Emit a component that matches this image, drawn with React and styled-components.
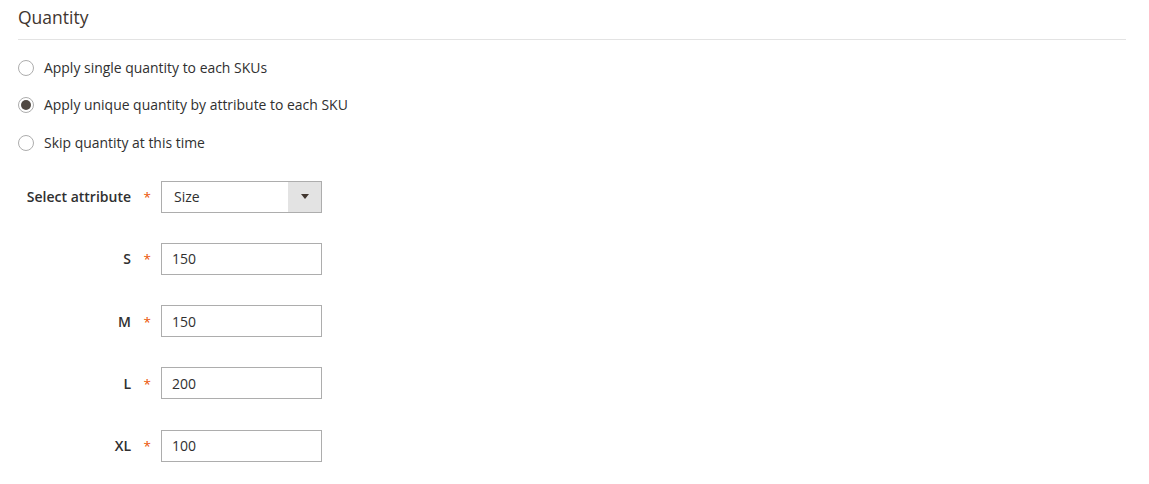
import React, { useState } from 'react'
import styled, { createGlobalStyle } from 'styled-components'

const GlobalStyle = createGlobalStyle`
  html, body {
    margin: 0;
    padding: 0;
    background: #fff;
  }
  body {
    font-family: "Open Sans", "Liberation Sans", Arial, sans-serif;
    color: #303030;
  }
`

const Page = styled.div`
  padding: 0 23px 0 18px;
`

const Title = styled.h2`
  margin: 0;
  padding: 5px 0 10px;
  font-size: 17.5px;
  font-weight: 400;
  line-height: 24px;
  color: #41362f;
  border-bottom: 1px solid #e3e3e3;
`

const Options = styled.div`
  display: flex;
  flex-direction: column;
  gap: 15.3px;
  padding-top: 17px;
`

const Option = styled.label`
  display: flex;
  align-items: center;
  gap: 10px;
  font-size: 13.95px;
  line-height: 22px;
  cursor: pointer;
`

const Radio = styled.span`
  box-sizing: border-box;
  width: 16px;
  height: 16px;
  border-radius: 50%;
  border: 1px solid #adadad;
  background: #fff;
  display: flex;
  align-items: center;
  justify-content: center;
  &::after {
    content: '';
    width: 10px;
    height: 10px;
    border-radius: 50%;
    background: ${p => (p.$checked ? '#514943' : 'transparent')};
  }
`

const Fields = styled.div`
  display: flex;
  flex-direction: column;
  gap: 30.3px;
  margin-top: 27px;
`

const Row = styled.div`
  display: flex;
  align-items: center;
`

const Label = styled.div`
  width: 143px;
  box-sizing: border-box;
  padding-right: 30px;
  text-align: right;
  font-size: 14px;
  font-weight: 600;
  color: #303030;
  position: relative;
  &::after {
    content: '*';
    position: absolute;
    right: 10px;
    top: 1px;
    color: #eb5202;
    font-size: 13.5px;
    font-weight: 400;
  }
`

const Input = styled.input`
  box-sizing: border-box;
  width: 161px;
  height: 32px;
  border: 1px solid #adadad;
  padding: 0 10px;
  font-family: inherit;
  font-size: 14px;
  color: #303030;
  outline: none;
  background: #fff;
`

const Select = styled.div`
  box-sizing: border-box;
  width: 161px;
  height: 32px;
  border: 1px solid #adadad;
  display: flex;
  font-size: 14px;
  background: #fff;
`

const SelectValue = styled.span`
  flex: 1;
  padding: 0 12px;
  display: flex;
  align-items: center;
`

const SelectArrow = styled.span`
  width: 33px;
  background: #e3e3e3;
  display: flex;
  align-items: center;
  justify-content: center;
  &::after {
    content: '';
    border-left: 4px solid transparent;
    border-right: 4px solid transparent;
    border-top: 5px solid #41362f;
  }
`

const options = [
  'Apply single quantity to each SKUs',
  'Apply unique quantity by attribute to each SKU',
  'Skip quantity at this time',
]

const sizes = [
  { name: 'S', qty: '150' },
  { name: 'M', qty: '150' },
  { name: 'L', qty: '200' },
  { name: 'XL', qty: '100' },
]

export default function App() {
  const [choice, setChoice] = useState(1)
  return (
    <Page>
      <GlobalStyle />
      <Title>Quantity</Title>
      <Options>
        {options.map((text, i) => (
          <Option key={text} onClick={() => setChoice(i)}>
            <Radio $checked={choice === i} />
            {text}
          </Option>
        ))}
      </Options>
      <Fields>
        <Row>
          <Label>Select attribute</Label>
          <Select>
            <SelectValue>Size</SelectValue>
            <SelectArrow />
          </Select>
        </Row>
        {sizes.map(s => (
          <Row key={s.name}>
            <Label>{s.name}</Label>
            <Input defaultValue={s.qty} />
          </Row>
        ))}
      </Fields>
    </Page>
  )
}
